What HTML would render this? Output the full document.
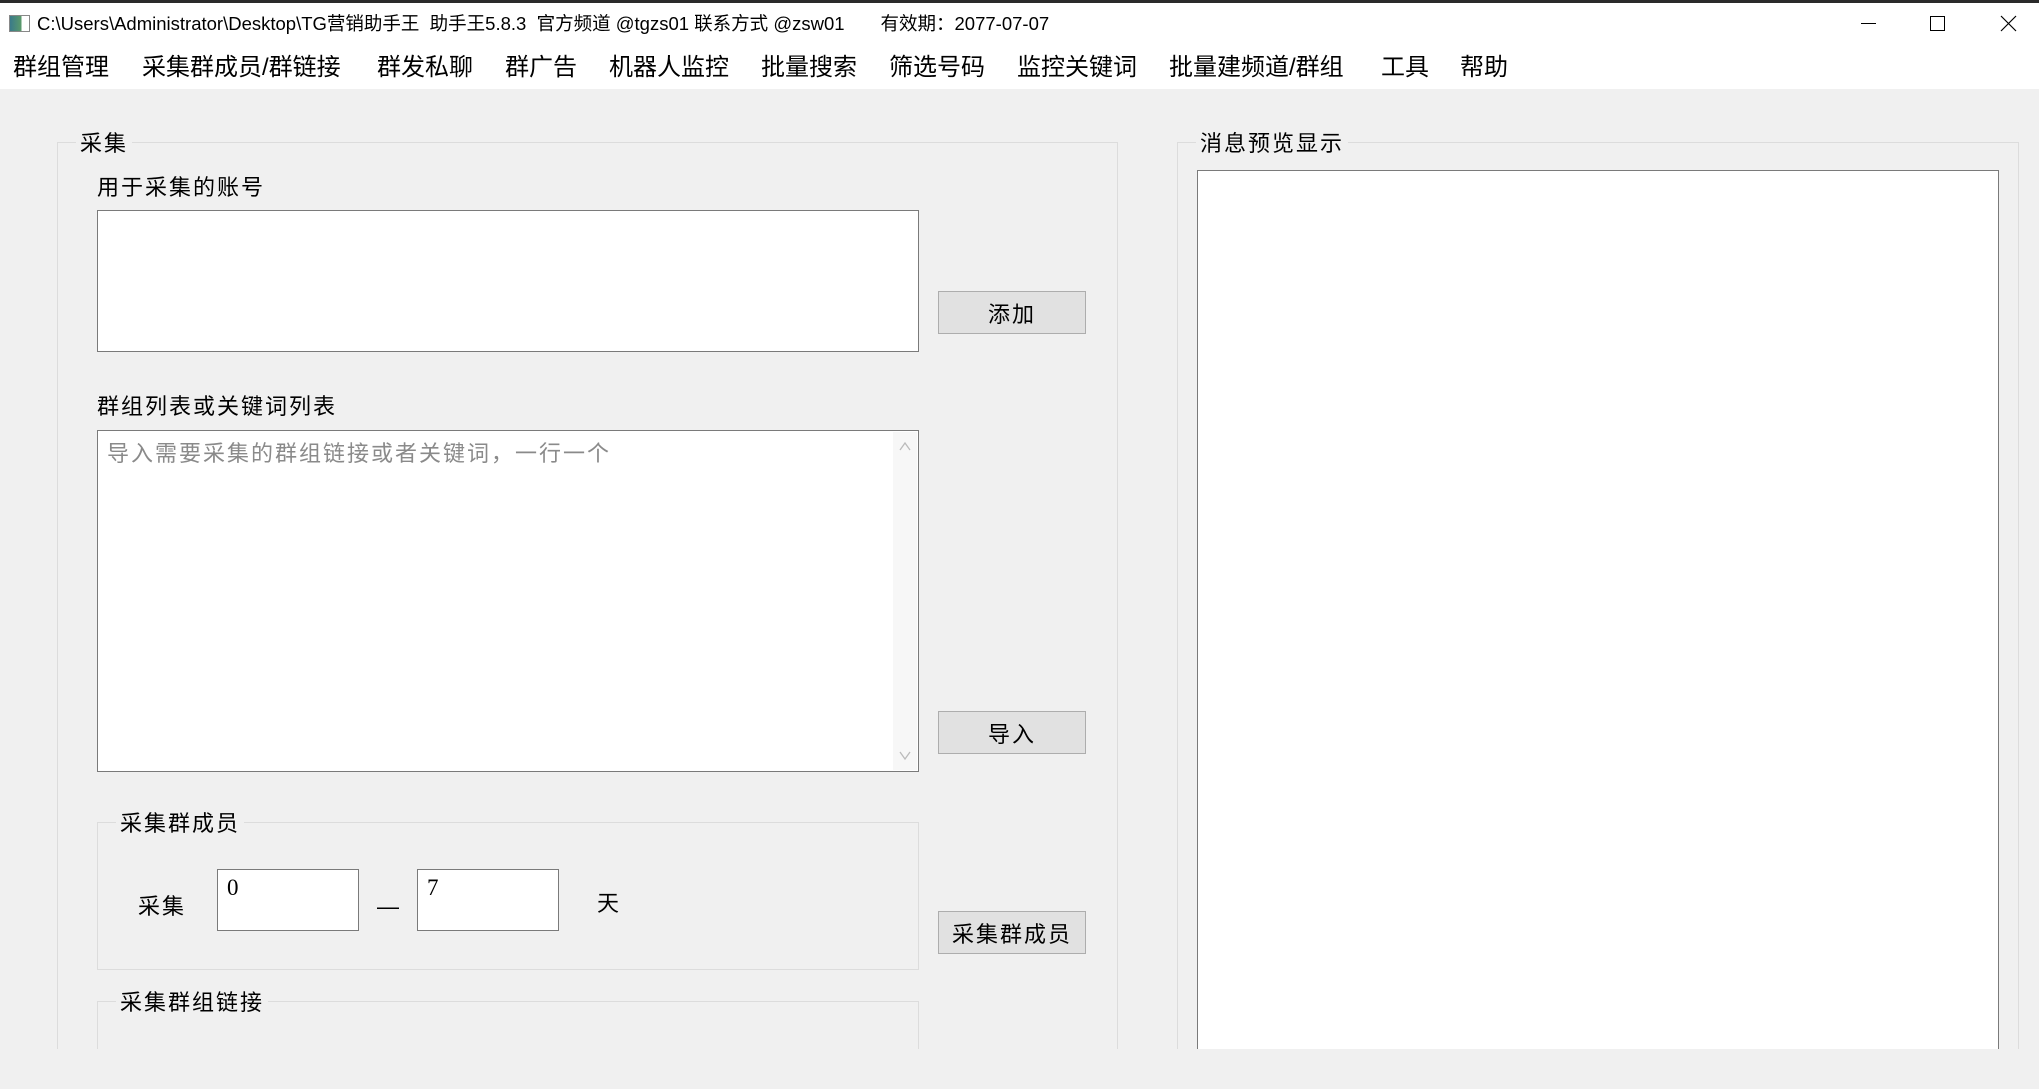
<!DOCTYPE html>
<html><head><meta charset="utf-8"><style>
*{margin:0;padding:0;box-sizing:border-box}
html,body{width:2039px;height:1089px;overflow:hidden}
body{background:#f0f0f0;position:relative;font-family:"Liberation Sans","Noto Sans CJK SC",sans-serif;color:#000}
.a{position:absolute}
.t{font-size:22px;letter-spacing:2px;line-height:28px;white-space:nowrap}
.gb{position:absolute;border:1px solid #dcdcdc}
.lbl{position:absolute;background:#f0f0f0;padding:0 4px}
.ta{position:absolute;background:#fff;border:1px solid #7a7a7a}
.btn{position:absolute;background:#e1e1e1;border:1px solid #adadad;font-size:22px;letter-spacing:2px;display:flex;align-items:center;justify-content:center}
.menu span{position:absolute;top:53px;font-size:24px;line-height:30px;white-space:nowrap}
</style></head><body>
<div class="a" style="left:0;top:0;width:2039px;height:89px;background:#fff"></div>
<div class="a" style="left:0;top:0;width:2039px;height:3px;background:#2a2a2a"></div>
<div class="a" style="left:9px;top:15px;width:21px;height:17px;border:1px solid #888;background:linear-gradient(90deg,#3a7a8a 0,#5a9a6a 60%,#fff 60%)"></div>
<div class="a" style="left:37px;top:11px;font-size:18.5px;line-height:26px;white-space:nowrap">C:\Users\Administrator\Desktop\TG营销助手王&nbsp; 助手王5.8.3&nbsp; 官方频道 @tgzs01 联系方式 @zsw01&nbsp;&nbsp;&nbsp;&nbsp;&nbsp;&nbsp; 有效期：2077-07-07</div>
<div class="a" style="left:1861px;top:23px;width:15px;height:1px;background:#000"></div>
<div class="a" style="left:1930px;top:16px;width:15px;height:15px;border:1px solid #000"></div>
<svg class="a" style="left:2000px;top:15px" width="17" height="17"><path d="M1 1L16 16M16 1L1 16" stroke="#000" stroke-width="1.2"/></svg>
<div class="menu">
<span style="left:13px">群组管理</span><span style="left:142px">采集群成员/群链接</span><span style="left:377px">群发私聊</span><span style="left:505px">群广告</span><span style="left:609px">机器人监控</span><span style="left:761px">批量搜索</span><span style="left:889px">筛选号码</span><span style="left:1017px">监控关键词</span><span style="left:1169px">批量建频道/群组</span><span style="left:1381px">工具</span><span style="left:1460px">帮助</span>
</div>
<div class="gb" style="left:57px;top:142px;width:1061px;height:930px"></div>
<div class="lbl t" style="left:76px;top:130px">采集</div>
<div class="a t" style="left:97px;top:174px">用于采集的账号</div>
<div class="ta" style="left:97px;top:210px;width:822px;height:142px"></div>
<div class="btn" style="left:938px;top:291px;width:148px;height:43px">添加</div>
<div class="a t" style="left:97px;top:393px">群组列表或关键词列表</div>
<div class="ta" style="left:97px;top:430px;width:822px;height:342px"></div>
<div class="a" style="left:893px;top:432px;width:24px;height:338px;background:#f7f7f7"></div>
<svg class="a" style="left:898px;top:440px" width="14" height="12"><path d="M2 10L7 3L12 10" stroke="#bbb" fill="none" stroke-width="1.3"/></svg>
<svg class="a" style="left:898px;top:750px" width="14" height="12"><path d="M2 2L7 9L12 2" stroke="#bbb" fill="none" stroke-width="1.3"/></svg>
<div class="a t" style="left:107px;top:440px;color:#8a8a8a">导入需要采集的群组链接或者关键词，一行一个</div>
<div class="btn" style="left:938px;top:711px;width:148px;height:43px">导入</div>
<div class="gb" style="left:97px;top:822px;width:822px;height:148px"></div>
<div class="lbl t" style="left:116px;top:810px">采集群成员</div>
<div class="a t" style="left:138px;top:893px">采集</div>
<div class="ta" style="left:217px;top:869px;width:142px;height:62px;padding:5px 9px;font-family:'Liberation Serif',serif;font-size:23px">0</div>
<div class="a t" style="left:377px;top:893px">—</div>
<div class="ta" style="left:417px;top:869px;width:142px;height:62px;padding:5px 9px;font-family:'Liberation Serif',serif;font-size:23px">7</div>
<div class="a t" style="left:597px;top:890px">天</div>
<div class="btn" style="left:938px;top:911px;width:148px;height:43px">采集群成员</div>
<div class="gb" style="left:97px;top:1001px;width:822px;height:70px"></div>
<div class="lbl t" style="left:116px;top:989px">采集群组链接</div>
<div class="gb" style="left:1177px;top:142px;width:842px;height:930px"></div>
<div class="lbl t" style="left:1196px;top:130px">消息预览显示</div>
<div class="ta" style="left:1197px;top:170px;width:802px;height:900px"></div>
<div class="a" style="left:0;top:1049px;width:2039px;height:40px;background:#f0f0f0"></div>
</body></html>
